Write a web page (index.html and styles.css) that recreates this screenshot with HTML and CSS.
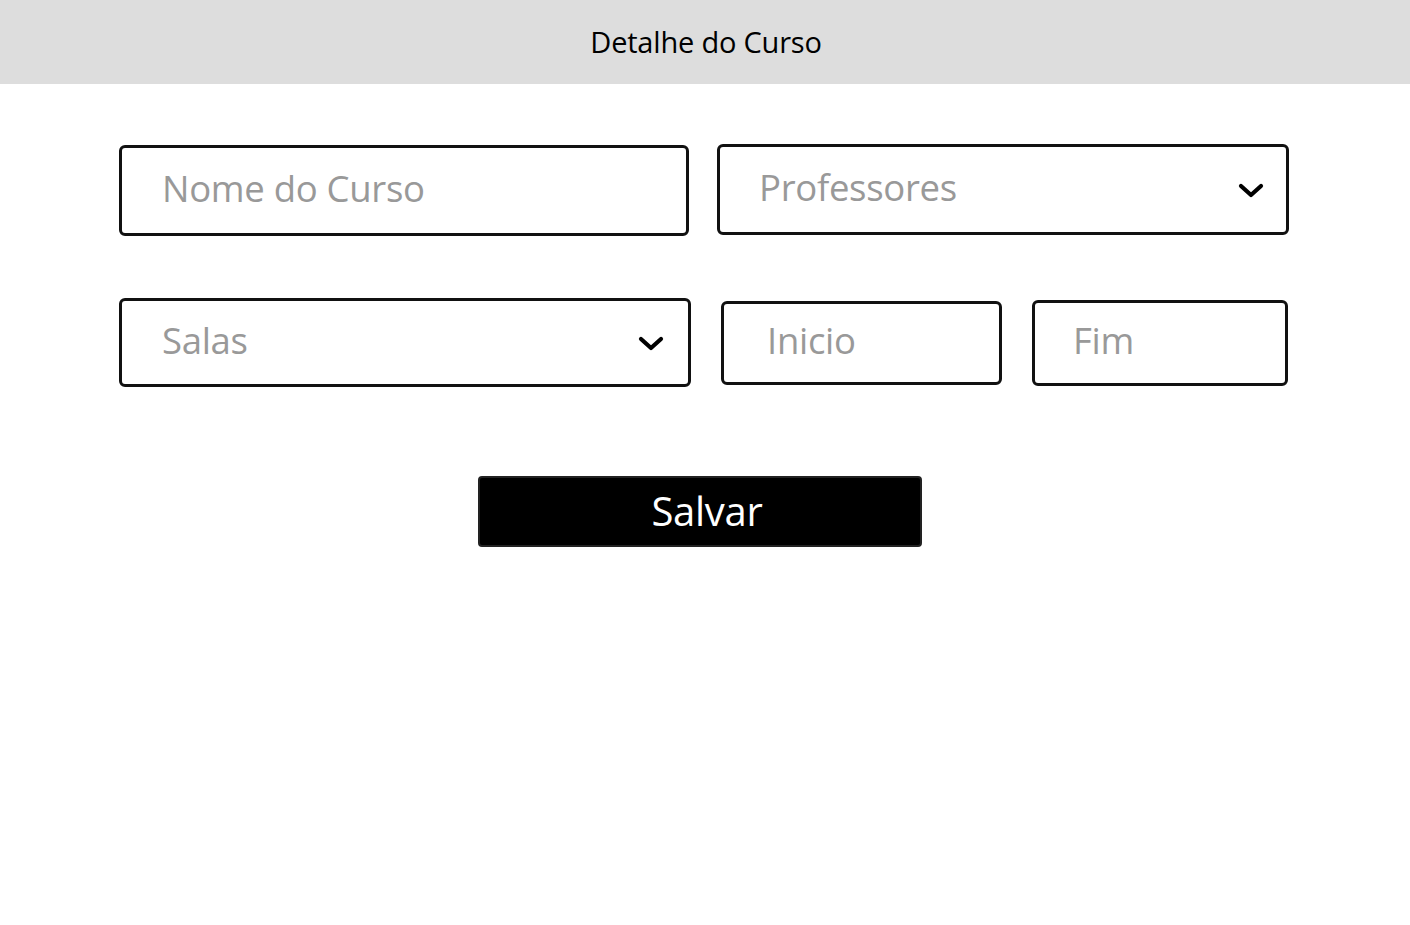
FILE: index.html
```html
<!DOCTYPE html>
<html lang="pt">
<head>
<meta charset="utf-8">
<title>Detalhe do Curso</title>
<link rel="stylesheet" href="styles.css">
</head>
<body>
<header class="topbar"><h1 class="title">Detalhe do Curso</h1></header>
<main class="form">
  <div class="row row-1">
    <div class="field field-nome"><span class="ph">Nome do Curso</span></div>
    <div class="field field-prof"><span class="ph">Professores</span>
      <svg class="chev" width="26" height="16" viewBox="0 0 26 16"><polyline points="3,3 13,12 23,3" fill="none" stroke="#000" stroke-width="4.2" stroke-linecap="round" stroke-linejoin="round"/></svg>
    </div>
  </div>
  <div class="row row-2">
    <div class="field field-salas"><span class="ph">Salas</span>
      <svg class="chev" width="26" height="16" viewBox="0 0 26 16"><polyline points="3,3 13,12 23,3" fill="none" stroke="#000" stroke-width="4.2" stroke-linecap="round" stroke-linejoin="round"/></svg>
    </div>
    <div class="field field-inicio"><span class="ph">Inicio</span></div>
    <div class="field field-fim"><span class="ph">Fim</span></div>
  </div>
  <div class="actions">
    <button class="btn">Salvar</button>
  </div>
</main>
</body>
</html>
```
FILE: styles.css
```css
html, body {
  margin: 0;
  padding: 0;
  background: #fff;
  font-family: "Open Sans", "Noto Sans", sans-serif;
}
.topbar {
  height: 84px;
  background: #dddddd;
  display: flex;
  align-items: center;
  justify-content: center;
}
.title {
  margin: 0;
  font-weight: 400;
  font-size: 29px;
  color: #000;
  letter-spacing: -0.2px;
  padding-bottom: 2px;
  padding-left: 2px;
}
.form {
  width: 1170px;
  margin: 0 0 0 119px;
  padding-top: 59px;
}
.row {
  display: flex;
  align-items: center;
}
.row-1 {
  gap: 28px;
}
.row-2 {
  margin-top: 62px;
  gap: 30px;
}
.field {
  box-sizing: border-box;
  border: 3px solid #111;
  border-radius: 6px;
  display: flex;
  align-items: center;
  justify-content: space-between;
  padding: 0 22px 0 40px;
  background: #fff;
}
.ph {
  color: #999999;
  font-size: 36.5px;
  letter-spacing: -0.3px;
  line-height: 1;
  padding-bottom: 5px;
}
.field-nome { width: 570px; height: 91px; margin-top: 2px; }
.field-prof { width: 572px; height: 91px; padding-left: 39px; }
.field-salas { width: 572px; height: 89px; padding-right: 24px; }
.field-inicio { width: 281px; height: 84px; padding-left: 43px; }
.field-fim { width: 256px; height: 86px; padding-left: 38px; }
.chev { display: block; margin-top: 2px; }
.actions {
  margin-top: 89px;
  padding-left: 359px;
}
.btn {
  width: 444px;
  height: 71px;
  background: #000;
  color: #fff;
  border: 2px solid #222;
  border-radius: 4px;
  font-family: "Open Sans", "Noto Sans", sans-serif;
  font-size: 40px;
  letter-spacing: -0.3px;
  padding: 0 0 1px 14px;
  line-height: 1;
  cursor: pointer;
}
```
